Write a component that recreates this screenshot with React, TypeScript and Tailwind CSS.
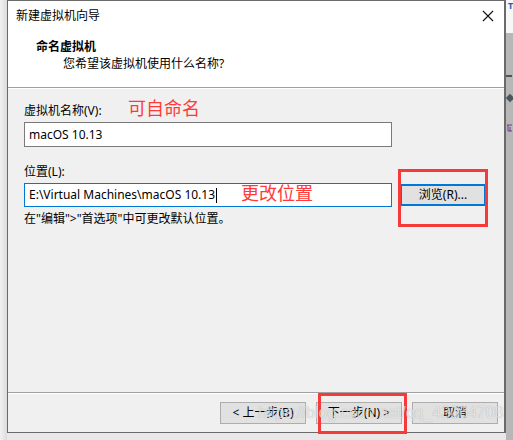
import React from "react";

const font = "font-['Noto_Sans','Noto_Sans_CJK_SC',sans-serif]";

function WinButton({ label, focused = false }: { label: string; focused?: boolean }) {
  return (
    <button
      type="button"
      className={`flex h-[22px] w-[86px] items-center justify-center bg-[#e1e1e1] text-[12px] leading-none text-black ${
        focused ? "border-2 border-[#0078d7]" : "border border-[#adadad]"
      }`}
    >
      {label}
    </button>
  );
}

export default function App() {
  return (
    <div className={`relative flex h-[440px] w-[513px] overflow-hidden bg-[#e8e8e8] ${font}`}>
      {/* left shadow */}
      <div className="h-full w-[7px] bg-gradient-to-r from-[#f2f2f2] to-[#dcdcdc]" />

      {/* dialog */}
      <div className="flex h-[433px] w-[499px] flex-col border-t border-b border-l border-r-2 border-[#6a6a6a] bg-[#f0f0f0]">
        {/* header */}
        <div className="flex h-[86px] flex-col bg-white">
          <div className="flex h-[30px] items-center justify-between pl-[8px] pr-[9px]">
            <span className="text-[12px] text-black">新建虚拟机向导</span>
            <svg width="12" height="12" viewBox="0 0 12 12" className="mr-[1px]">
              <path d="M1 1 L11 11 M11 1 L1 11" stroke="#111" strokeWidth="1.1" fill="none" />
            </svg>
          </div>
          <div className="mt-[8px] pl-[28px] text-[12px] font-bold leading-[16px] text-black">命名虚拟机</div>
          <div className="mt-[1px] pl-[55px] text-[12px] leading-[16px] text-black">您希望该虚拟机使用什么名称?</div>
        </div>
        <div className="h-px bg-[#a0a0a0]" />
        <div className="h-px bg-white" />

        {/* body */}
        <div className="flex h-[303px] flex-col pl-[16px] pt-[14px]">
          <div className="text-[12px] leading-[16px] text-black">虚拟机名称(V):</div>
          <div className="mt-[3px] flex h-[25px] w-[368px] items-center border border-[#7a7a7a] bg-white pl-[4px] text-[12px] text-black">
            macOS 10.13
          </div>
          <div className="mt-[17px] text-[12px] leading-[16px] text-black">位置(L):</div>
          <div className="mt-[3px] flex items-center gap-[8px]">
            <div className="flex h-[24px] w-[368px] items-center border border-[#0078d7] bg-white pl-[4px] text-[12px] text-black">
              E:\Virtual Machines\macOS 10.13
              <span className="ml-px inline-block h-[15px] w-px bg-black" />
            </div>
            <WinButton label="浏览(R)..." focused />
          </div>
          <div className="mt-[4px] text-[12px] leading-[16px] text-black">在"编辑"&gt;"首选项"中可更改默认位置。</div>
        </div>

        <div className="h-px bg-[#a0a0a0]" />
        <div className="h-px bg-white" />

        {/* footer */}
        <div className="flex h-[38px] items-start justify-end gap-[10px] pr-[6px] pt-[8px]">
          <WinButton label="< 上一步(B)" />
          <WinButton label="下一步(N) >" />
          <WinButton label="取消" />
        </div>
      </div>

      {/* background window strip on the right */}
      <div className="flex h-full w-[7px] flex-col">
        <div className="h-[33px] bg-[#f7f7f7] pl-[2px] text-[9px] font-bold leading-[12px] text-[#2a5caa]">T</div>
        <div className="flex flex-1 flex-col bg-[#b7b7b7]">
          <div className="mt-[42px] h-[2px] w-[6px] bg-[#4a5560]" />
          <div className="ml-px mt-[18px] h-[6px] w-[6px] rotate-45 bg-[#4a5560]" />
          <svg width="7" height="10" viewBox="0 0 7 10" className="mt-[22px]">
            <path d="M1 2 H6 M2 2 V8 H6 M4 4 V8" stroke="#6a3f8a" strokeWidth="1" fill="none" />
          </svg>
        </div>
      </div>

      {/* annotations */}
      <div className="absolute left-[128px] top-[96px] text-[18px] leading-[24px] text-[#ff3a3a]">可自命名</div>
      <div className="absolute left-[241px] top-[181px] text-[18px] leading-[24px] text-[#ff3a3a]">更改位置</div>
      <div className="absolute left-[398px] top-[169px] h-[58px] w-[90px] border-[3px] border-[#f63a3a]" />
      <div className="absolute left-[318px] top-[393px] h-[41px] w-[89px] border-[3px] border-[#f63a3a]" />

      {/* watermark */}
      <div className="absolute left-[258px] top-[403px] whitespace-nowrap font-['Liberation_Sans',sans-serif] text-[16px] leading-[20px] text-white/70 [text-shadow:0_0_1px_rgba(0,0,0,0.3)]">
        https://blog.csdn.net/qq_43064708
      </div>
    </div>
  );
}
